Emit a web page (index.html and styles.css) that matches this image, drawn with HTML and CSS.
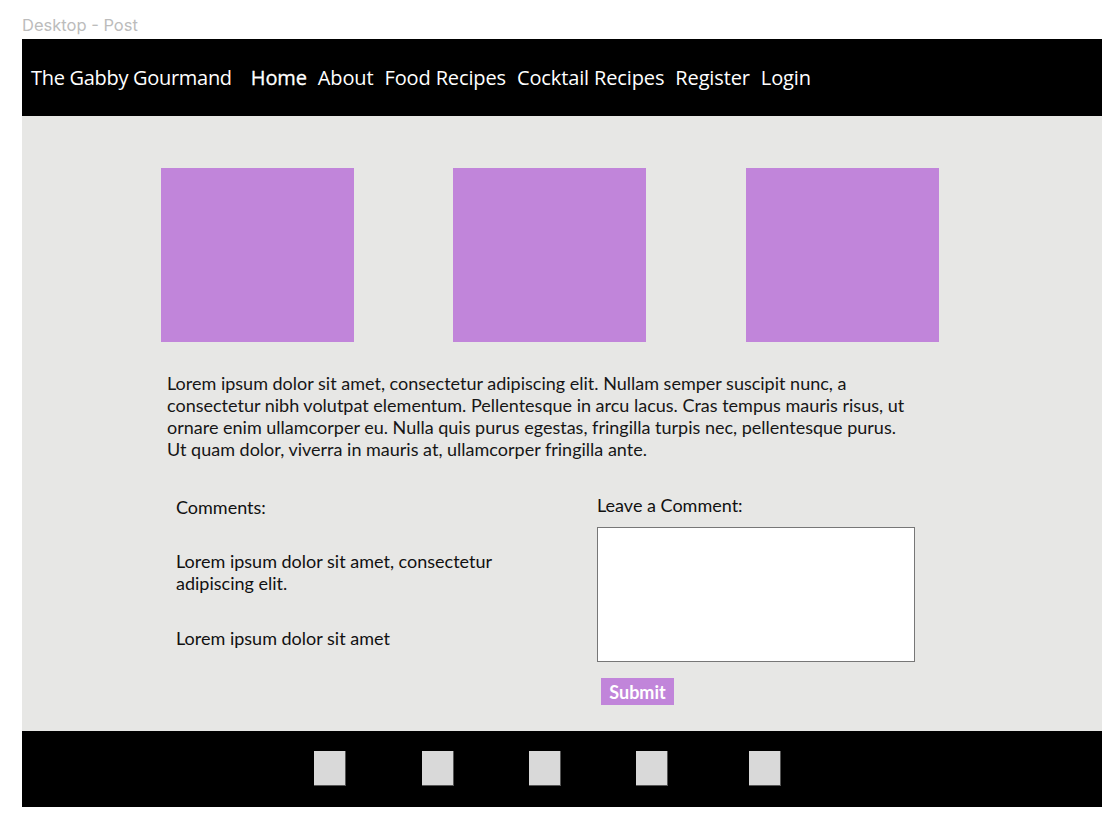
FILE: index.html
```html
<!DOCTYPE html>
<html>
<head>
<meta charset="utf-8">
<link rel="stylesheet" href="styles.css">
</head>
<body>
<div class="label">Desktop - Post</div>
<div class="frame">
  <header class="topbar">
    <span class="brand">The Gabby Gourmand</span>
    <nav class="nav">
      <a class="nav-link active">Home</a>
      <a class="nav-link">About</a>
      <a class="nav-link">Food Recipes</a>
      <a class="nav-link">Cocktail Recipes</a>
      <a class="nav-link">Register</a>
      <a class="nav-link">Login</a>
    </nav>
  </header>
  <main class="content">
    <div class="gallery">
      <div class="photo"></div>
      <div class="photo"></div>
      <div class="photo"></div>
    </div>
    <p class="post-text">Lorem ipsum dolor sit amet, consectetur adipiscing elit. Nullam semper suscipit nunc, a consectetur nibh volutpat elementum. Pellentesque in arcu lacus. Cras tempus mauris risus, ut ornare enim ullamcorper eu. Nulla quis purus egestas, fringilla turpis nec, pellentesque purus. Ut quam dolor, viverra in mauris at, ullamcorper fringilla ante.</p>
    <div class="discussion">
      <section class="comments">
        <h2 class="heading">Comments:</h2>
        <p class="comment first">Lorem ipsum dolor sit amet, consectetur adipiscing elit.</p>
        <p class="comment">Lorem ipsum dolor sit amet</p>
      </section>
      <section class="leave">
        <h2 class="heading">Leave a Comment:</h2>
        <div class="textbox"></div>
        <button class="submit">Submit</button>
      </section>
    </div>
  </main>
  <footer class="footer">
    <span class="social"></span>
    <span class="social"></span>
    <span class="social"></span>
    <span class="social"></span>
    <span class="social"></span>
  </footer>
</div>
</body>
</html>
```

FILE: styles.css
```css
html, body {
  margin: 0;
  padding: 0;
  background: #ffffff;
}
body {
  font-family: "Lato", "Liberation Sans", sans-serif;
}
.label {
  height: 39px;
  box-sizing: border-box;
  padding: 15px 0 0 22px;
  font-family: "Inter", "Noto Sans", sans-serif;
  font-size: 16.5px;
  line-height: 21px;
  color: #bcbcbc;
}
.frame {
  margin-left: 22px;
  width: 1080px;
}
.topbar {
  height: 77px;
  background: #000;
  display: flex;
  align-items: center;
  padding-left: 9px;
  font-family: "Open Sans", "Noto Sans", sans-serif;
  font-size: 20px;
  color: #fff;
  letter-spacing: -0.3px;
}
.brand {
  margin-right: 19px;
}
.nav {
  display: flex;
  gap: 11px;
  letter-spacing: -0.13px;
}
.nav-link {
  color: #fff;
}
.nav-link.active {
  font-weight: 500;
  -webkit-text-stroke: 0.3px #fff;
}
.content {
  background: #e7e7e5;
  padding: 52px 0 26px 0;
}
.gallery {
  display: flex;
  gap: 99px;
  padding-left: 139px;
}
.photo {
  width: 193px;
  height: 174px;
  background: #c185da;
}
.photo:last-child {
  margin-left: 1px;
}
.post-text {
  margin: 30px 0 0 145px;
  width: 745px;
  font-size: 18px;
  line-height: 22px;
  color: #161616;
}
.discussion {
  display: flex;
  margin-top: 34px;
}
.comments {
  padding-left: 154px;
  width: 330px;
}
.leave {
  margin-left: 91px;
  display: flex;
  flex-direction: column;
  align-items: flex-start;
}
.heading {
  margin: 0;
  font-size: 18px;
  font-weight: 400;
  line-height: 22px;
  color: #111;
}
.comments .heading {
  margin-top: 2px;
}
.comment {
  margin: 33px 0 0 0;
  font-size: 18px;
  line-height: 22px;
  color: #111;
}
.comment.first {
  margin-top: 32px;
}
.textbox {
  margin-top: 11px;
  width: 316px;
  height: 133px;
  background: #fff;
  border: 1px solid #777;
}
.submit {
  margin: 16px 0 0 4px;
  width: 73px;
  height: 27px;
  padding: 0;
  border: none;
  background: #c185da;
  color: #fff;
  font-family: "Lato", sans-serif;
  font-weight: 700;
  font-size: 18px;
}
.footer {
  height: 76px;
  background: #000;
  display: flex;
  align-items: flex-start;
  padding-top: 20px;
  box-sizing: border-box;
}
.social {
  width: 32px;
  height: 35px;
  background: #d9d9d9;
  box-sizing: border-box;
  border-right: 1px solid #555;
  border-bottom: 1px solid #555;
}
.social:nth-child(1) { margin-left: 292px; }
.social:nth-child(2) { margin-left: 76px; }
.social:nth-child(3) { margin-left: 75px; }
.social:nth-child(4) { margin-left: 75px; }
.social:nth-child(5) { margin-left: 81px; }
```
